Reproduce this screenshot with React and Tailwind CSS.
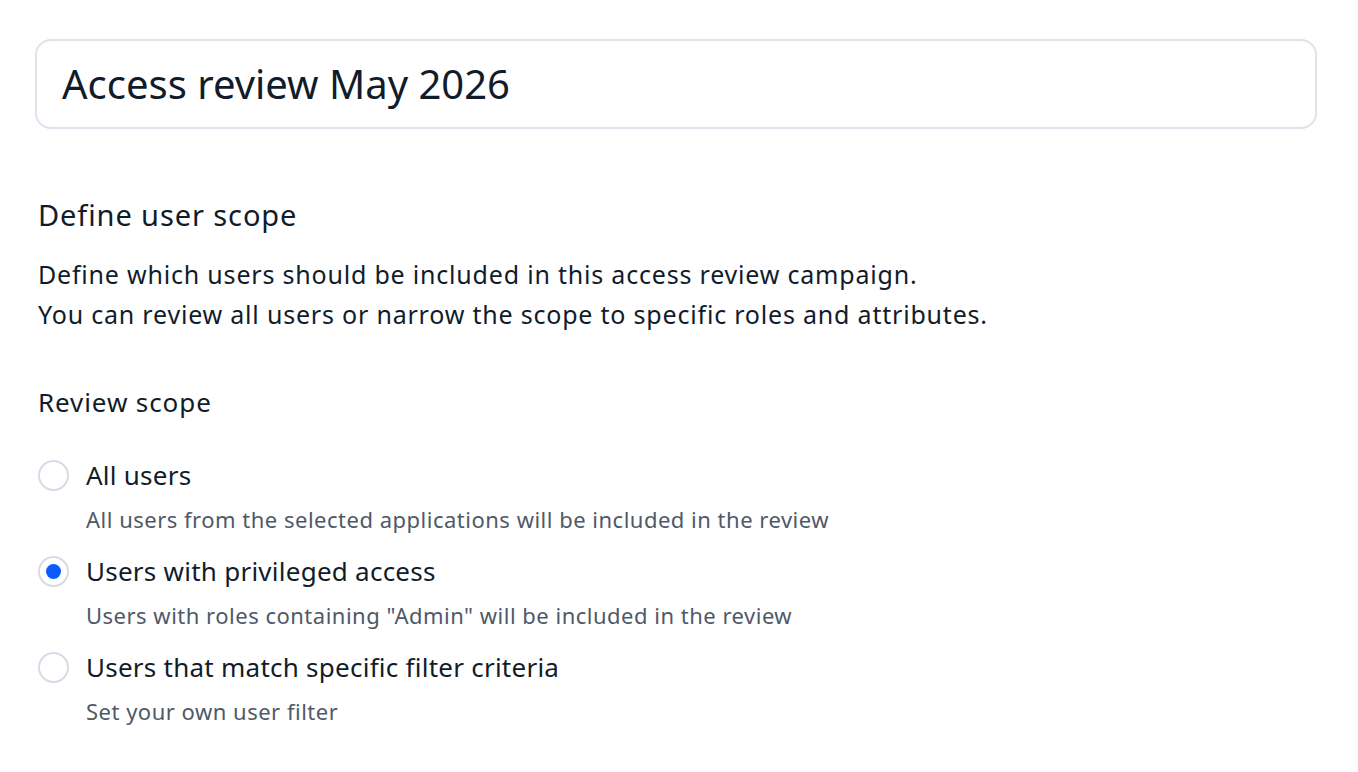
import { useState } from "react";

const options = [
  { id: "all", label: "All users", hint: "All users from the selected applications will be included in the review" },
  { id: "privileged", label: "Users with privileged access", hint: 'Users with roles containing "Admin" will be included in the review' },
  { id: "filter", label: "Users that match specific filter criteria", hint: "Set your own user filter" },
];

export default function App() {
  const [scope, setScope] = useState("privileged");

  return (
    <div className="min-h-screen bg-white pl-[35px] pr-[41px] pt-[39px] text-[#111c2b]" style={{ fontFamily: '"Noto Sans", sans-serif' }}>
      <div className="h-[90px] rounded-[16px] border-2 border-[#dde2ec] flex items-center px-[25px]">
        <span className="text-[40px] leading-none">Access review May 2026</span>
      </div>

      <div className="pl-[3px]">
        <h2 className="mt-[66px] text-[29px] leading-[40px] tracking-[0.9px]">Define user scope</h2>
        <p className="mt-[19px] text-[25px] leading-[40px] tracking-[0.8px]">
          Define which users should be included in this access review campaign.
          <br />
          You can review all users or narrow the scope to specific roles and attributes.
        </p>

        <h3 className="mt-[48px] text-[26px] leading-[40px] tracking-[0.9px]">Review scope</h3>

        <div className="mt-[33px] flex flex-col gap-[8px]">
          {options.map((o) => (
            <label key={o.id} className="flex gap-[17px] cursor-pointer" onClick={() => setScope(o.id)}>
              <span className="mt-[5px] w-[31px] h-[31px] rounded-full border-2 border-[#d6dce6] flex items-center justify-center shrink-0">
                {scope === o.id && <span className="w-[15px] h-[15px] rounded-full bg-[#0a5cff]" />}
              </span>
              <span className="flex flex-col">
                <span className="text-[26px] leading-[40px] tracking-[0.25px]">{o.label}</span>
                <span className="text-[22px] leading-[48px] tracking-[0.5px] text-[#4f5968]">{o.hint}</span>
              </span>
            </label>
          ))}
        </div>
      </div>
    </div>
  );
}
